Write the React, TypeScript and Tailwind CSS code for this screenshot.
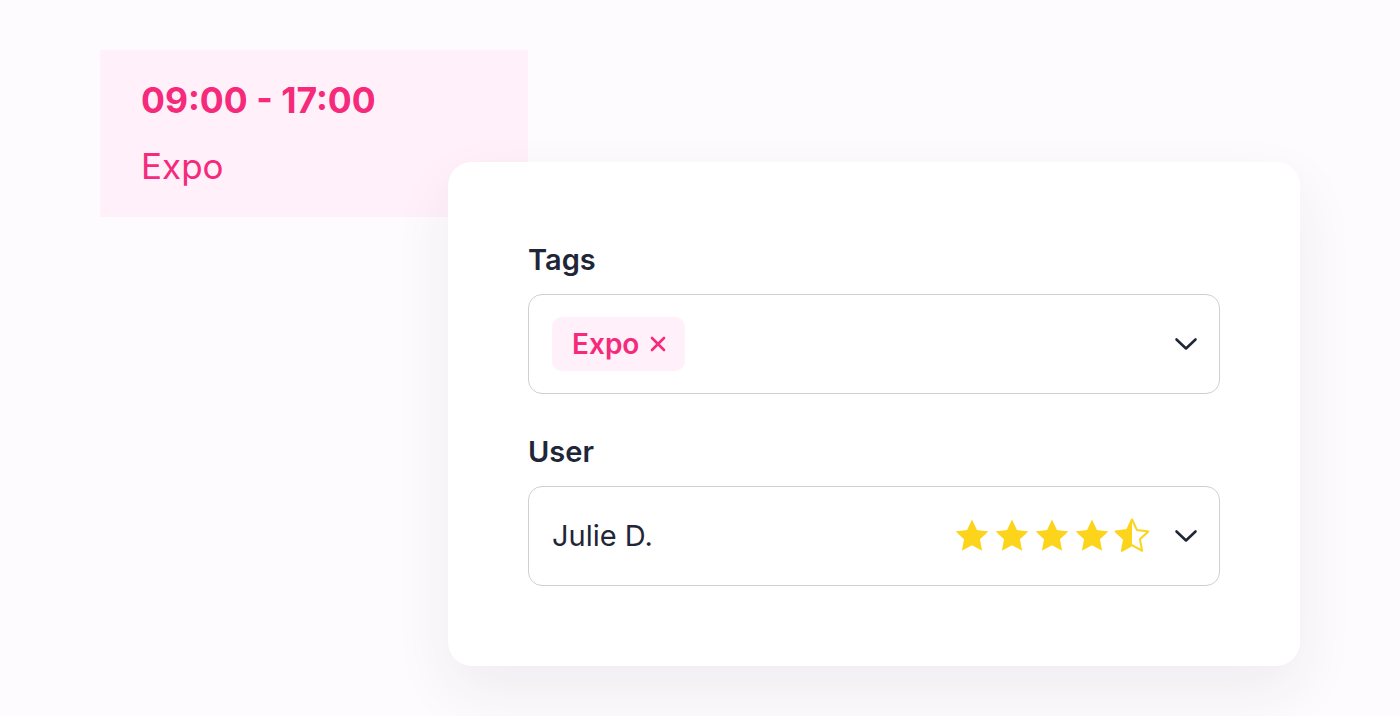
const Chevron = () => (
  <svg width="24" height="14" viewBox="0 0 24 14" fill="none" className="shrink-0">
    <path d="M2.5 2.5 12 11.5 21.5 2.5" stroke="#1f2637" strokeWidth="2.6" strokeLinecap="round" strokeLinejoin="round" />
  </svg>
)

const STAR = 'M12 1.6l3.1 6.6 7.2.9-5.3 5 1.4 7.2L12 17.8l-6.4 3.5L7 14.1l-5.3-5 7.2-.9z'

function Star({ half = false }: { half?: boolean }) {
  return (
    <svg width="38" height="38" viewBox="0 0 24 24" className="shrink-0">
      <defs>
        <clipPath id="left-half">
          <rect x="0" y="0" width="12" height="24" />
        </clipPath>
      </defs>
      {half ? (
        <>
          <path d={STAR} fill="none" stroke="#fcd41c" strokeWidth="1.3" strokeLinejoin="round" />
          <path d={STAR} fill="#fcd41c" clipPath="url(#left-half)" />
        </>
      ) : (
        <path d={STAR} fill="#fcd41c" />
      )}
    </svg>
  )
}

export default function App() {
  return (
    <div className="min-h-[716px] w-full overflow-hidden bg-[#fdfbfd] font-['Inter',sans-serif]">
      <div className="flex flex-col items-start">
        <div className="ml-[100px] mt-[50px] h-[167px] w-[428px] bg-[#fff0f9] pl-[41px] pt-[29px]">
          <div className="text-[35.5px] font-bold leading-[44px] text-[#f52a7b]">09:00 - 17:00</div>
          <div className="mt-[21px] text-[35px] leading-[44px] text-[#f52a7b]">Expo</div>
        </div>

        <div className="-mt-[55px] ml-[448px] flex h-[504px] w-[852px] flex-col rounded-[24px] bg-white p-[80px] shadow-[0_24px_60px_rgba(60,40,80,0.07)]">
          <label className="text-[29px] font-semibold leading-[36px] text-[#1f2637]">Tags</label>
          <div className="mt-4 flex h-[100px] items-center justify-between rounded-[14px] border border-[#cfcfd6] pl-[23px] pr-[21px]">
            <span className="flex h-[54px] items-center gap-[11px] rounded-[10px] bg-[#fff0f9] pl-[20px] pr-[19px] text-[28px] font-semibold text-[#f52a7b]">
              Expo
              <svg width="16" height="16" viewBox="0 0 16 16" fill="none">
                <path d="M2 2l12 12M14 2 2 14" stroke="#f52a7b" strokeWidth="2.6" strokeLinecap="round" />
              </svg>
            </span>
            <Chevron />
          </div>

          <label className="mt-10 text-[29px] font-semibold leading-[36px] text-[#1f2637]">User</label>
          <div className="mt-4 flex h-[100px] items-center justify-between rounded-[14px] border border-[#cfcfd6] pl-[23px] pr-[21px]">
            <span className="text-[29px] text-[#1f2637]">Julie D.</span>
            <div className="flex items-center gap-[23px]">
              <div className="flex items-center gap-[2px]">
                <Star />
                <Star />
                <Star />
                <Star />
                <Star half />
              </div>
              <Chevron />
            </div>
          </div>
        </div>
      </div>
    </div>
  )
}
